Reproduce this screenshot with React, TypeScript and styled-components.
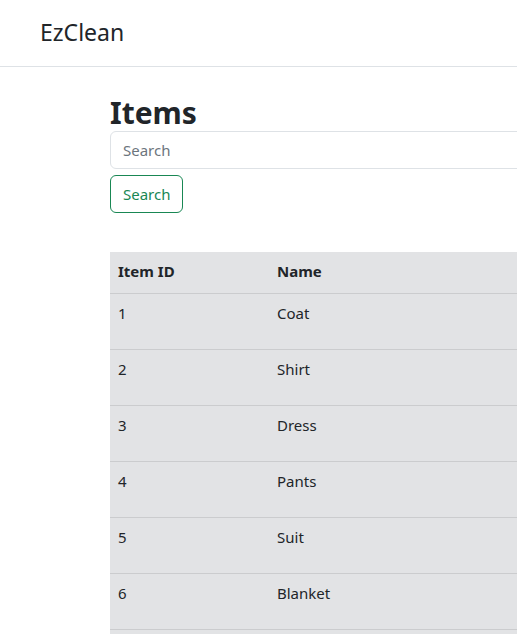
import React from "react";
import styled, { createGlobalStyle } from "styled-components";

const GlobalStyle = createGlobalStyle`
  html, body { margin: 0; padding: 0; background: #fff; overflow: hidden; }
  body {
    font-family: "Noto Sans", "Open Sans", sans-serif;
    font-size: 16px;
    line-height: 1.5;
    color: #212529;
  }
  * { box-sizing: border-box; }
`;

const NavBar = styled.nav`
  height: 67px;
  border-bottom: 1px solid #dee2e6;
  display: flex;
  align-items: center;
  padding: 0 40px;
`;

const Brand = styled.a`
  font-size: 23px;
  color: #212529;
  text-decoration: none;
  line-height: 1.5;
  margin-top: -2px;
`;

const Main = styled.main`
  padding: 28px 0 0 110px;
  width: 900px;
`;

const Title = styled.h1`
  margin: 0;
  font-size: 30px;
  font-weight: 700;
  line-height: 36px;
`;

const SearchForm = styled.form`
  display: flex;
  flex-direction: column;
  align-items: flex-start;
  gap: 6px;
`;

const SearchInput = styled.input`
  width: 100%;
  height: 38px;
  padding: 6px 12px;
  font: inherit;
  font-size: 15px;
  color: #212529;
  border: 1px solid #dee2e6;
  border-radius: 6px;
  outline: none;
  &::placeholder { color: #6c757d; }
`;

const OutlineButton = styled.button`
  height: 38px;
  padding: 6px 12px;
  font: inherit;
  font-size: 15px;
  color: #198754;
  background: transparent;
  border: 1px solid #198754;
  border-radius: 6px;
`;

const Table = styled.table`
  margin-top: 39px;
  width: 100%;
  border-collapse: collapse;
  background: #e2e3e5;
  font-size: 15px;
`;

const HeadCell = styled.th<{ $w?: number }>`
  text-align: left;
  vertical-align: top;
  font-weight: 700;
  padding: 8px;
  height: 41px;
  border-bottom: 1px solid #cbccce;
  width: ${(p) => (p.$w ? `${p.$w}px` : "auto")};
`;

const Row = styled.tr`
  height: 56px;
`;

const Cell = styled.td`
  padding: 8px;
  vertical-align: top;
  border-bottom: 1px solid #cbccce;
`;

const items = ["Coat", "Shirt", "Dress", "Pants", "Suit", "Blanket", "Jacket"];

export default function App() {
  return (
    <>
      <GlobalStyle />
      <NavBar>
        <Brand href="#">EzClean</Brand>
      </NavBar>
      <Main>
        <Title>Items</Title>
        <SearchForm onSubmit={(e) => e.preventDefault()}>
          <SearchInput placeholder="Search" />
          <OutlineButton type="submit">Search</OutlineButton>
        </SearchForm>
        <Table>
          <thead>
            <tr>
              <HeadCell $w={159}>Item ID</HeadCell>
              <HeadCell>Name</HeadCell>
            </tr>
          </thead>
          <tbody>
            {items.map((name, i) => (
              <Row key={name}>
                <Cell>{i + 1}</Cell>
                <Cell>{name}</Cell>
              </Row>
            ))}
          </tbody>
        </Table>
      </Main>
    </>
  );
}
